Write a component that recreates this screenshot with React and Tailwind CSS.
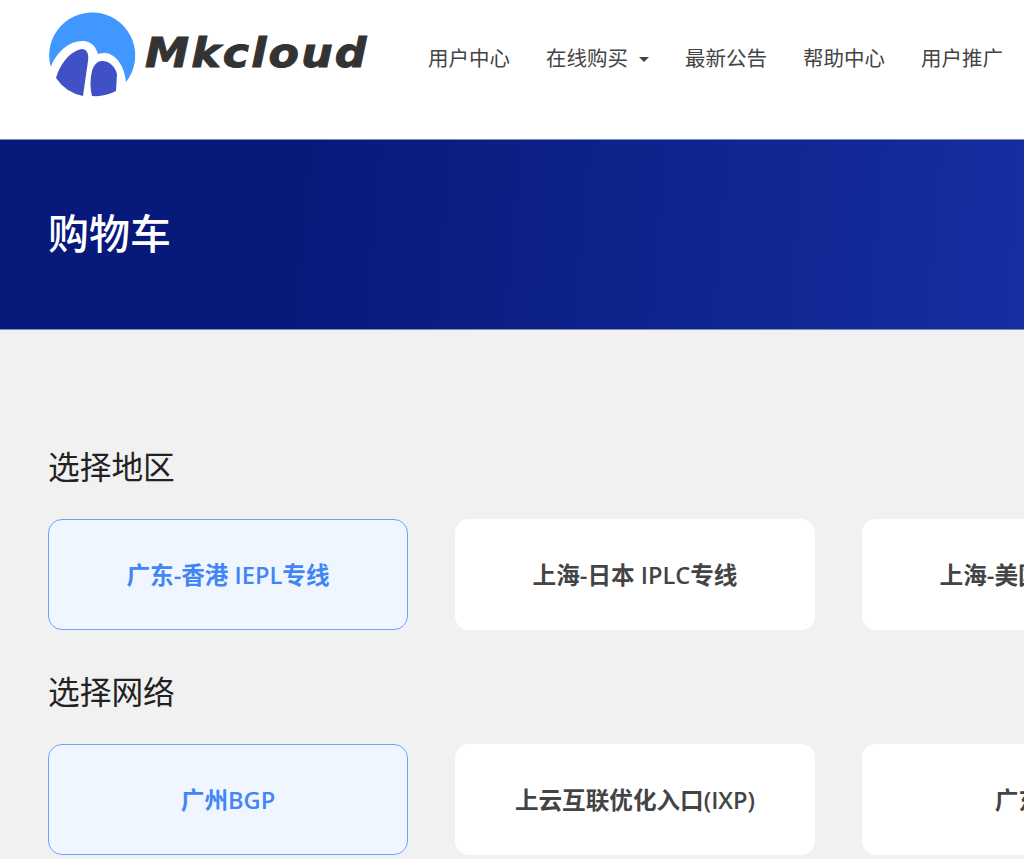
import React from "react";

const font = { fontFamily: '"Open Sans", "Noto Sans CJK SC", sans-serif' };

const navItems = ["用户中心", "在线购买", "最新公告", "帮助中心", "用户推广"];

const sections = [
  { title: "选择地区", cards: ["广东-香港 IEPL专线", "上海-日本 IPLC专线", "上海-美国 IPLC专线"] },
  { title: "选择网络", cards: ["广州BGP", "上云互联优化入口(IXP)", "广东移动"] },
];

const Logo = () => (
  <svg width="88" height="88" viewBox="0 0 88 88" className="shrink-0">
    <path d="M2.7 57.7 A43 43 0 1 1 78 73 C77 66 76 62 74 58 C71 51 65 45 58 44 C55 44 52 44 50 45 C48 38 44 33 36 32 C21 31 9 43 2.7 57.7 Z" fill="#3f97ff" />
    <path d="M8 69 C12 55 22 42 34 40 C39 40 41 45 40 52 L35 87 A43 43 0 0 1 8 69 Z" fill="#3f51c4" />
    <path d="M44 87 C42 78 42 70 44 62 C46 55 50 52 54 52 C62 52 67 58 69 65 L68 82 A43 43 0 0 1 44 87 Z" fill="#3f51c4" />
  </svg>
);

const App = () => {
  return (
    <div className="w-[1024px] h-[859px] overflow-hidden bg-[#f1f1f1]" style={font}>
      <header className="h-[139px] bg-white flex items-start pl-[48px]">
        <div className="flex items-center mt-[9px] w-[380px]">
          <Logo />
          <span
            className="ml-[9px] mt-[1px] text-[41px] leading-none font-bold italic tracking-[2px] text-[#333333] origin-left scale-x-[1.08] [-webkit-text-stroke:1px_#333333]"
            style={{ fontFamily: '"DejaVu Sans", sans-serif' }}
          >
            Mkcloud
          </span>
        </div>
        <nav className="flex items-center gap-[36px] h-[116px] text-[20.5px] text-[#444444] whitespace-nowrap">
          {navItems.map((item, i) => (
            <span key={item} className="flex items-center">
              {item}
              {i === 1 && <span className="ml-[11px] mt-[2px] w-0 h-0 border-x-[5.5px] border-x-transparent border-t-[5.5px] border-t-[#444444]" />}
            </span>
          ))}
        </nav>
      </header>

      <div className="h-[191px] flex items-center pl-[48px] border-y border-[#7f8cc4] bg-[linear-gradient(95deg,#07197b_0%,#07197b_30%,#152ea0_100%)]">
        <h1 className="text-[41px] font-medium text-white leading-none mt-[-3px]">购物车</h1>
      </div>

      <main className="pt-[116px] pl-[48px]">
        {sections.map((section) => (
          <section key={section.title} className="mb-[41px]">
            <h2 className="text-[31.7px] leading-[42px] text-[#222222] mb-[31px]">{section.title}</h2>
            <div className="flex gap-[47px]">
              {section.cards.map((card, i) => (
                <div
                  key={card}
                  className={`w-[360px] h-[111px] pt-[2px] shrink-0 rounded-[14px] flex items-center justify-center text-[23.6px] font-semibold whitespace-nowrap ${
                    i === 0 ? "bg-[#f0f6ff] border border-[#6fa3fb] text-[#4285f4]" : "bg-white text-[#444444]"
                  }`}
                >
                  {card}
                </div>
              ))}
            </div>
          </section>
        ))}
      </main>
    </div>
  );
};

export default App;
